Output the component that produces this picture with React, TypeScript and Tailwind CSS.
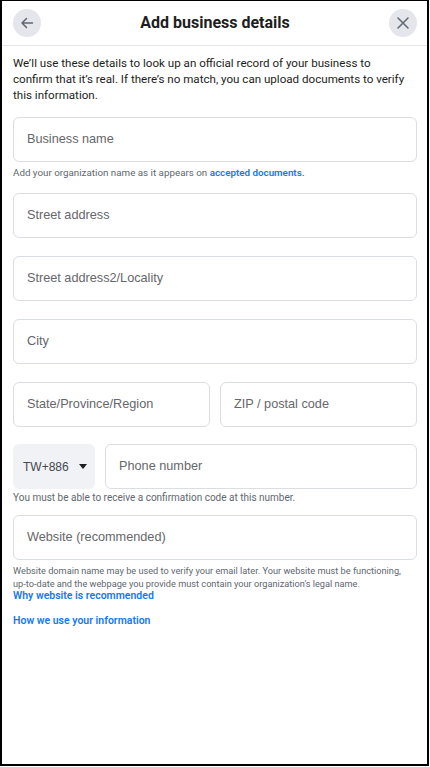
import React from "react";

const ui = { fontFamily: 'Roboto, "Noto Sans", Arial, sans-serif' };
const arial = { fontFamily: '"Liberation Sans", Arial, sans-serif' };

function Field({
  placeholder,
  className = "",
}: {
  placeholder: string;
  className?: string;
}) {
  return (
    <div
      className={`flex h-[45px] items-center rounded-[6px] border border-[#dadde1] bg-white px-[13px] ${className}`}
    >
      <input
        placeholder={placeholder}
        style={arial}
        className="w-full bg-transparent text-[12.7px] text-[#1c1e21] outline-none placeholder:text-[#65676b]"
      />
    </div>
  );
}

function Helper({
  children,
  className = "mt-[3px] text-[10px]",
}: {
  children: React.ReactNode;
  className?: string;
}) {
  return (
    <p className={`leading-[13px] text-[#606770] ${className}`}>{children}</p>
  );
}

export default function App() {
  return (
    <div
      style={ui}
      className="flex h-[766px] w-[429px] flex-col border-x-2 border-t border-b-2 border-black bg-white"
    >
      <header className="flex h-[45px] shrink-0 items-center justify-between border-b border-[#e4e6eb] pl-[11px] pr-[10px]">
        <button
          type="button"
          className="flex h-[28px] w-[28px] items-center justify-center rounded-full bg-[#e4e6eb]"
          aria-label="Back"
        >
          <svg width="14" height="14" viewBox="0 0 14 14" fill="none">
            <path
              d="M12.5 7H2M6.5 2.5L2 7l4.5 4.5"
              stroke="#606770"
              strokeWidth="1.5"
              strokeLinecap="round"
              strokeLinejoin="round"
            />
          </svg>
        </button>
        <h1 className="text-[16px] font-bold text-[#1c1e21]">
          Add business details
        </h1>
        <button
          type="button"
          className="flex h-[28px] w-[28px] items-center justify-center rounded-full bg-[#e4e6eb]"
          aria-label="Close"
        >
          <svg width="14" height="14" viewBox="0 0 14 14" fill="none">
            <path
              d="M2 2l10 10M12 2L2 12"
              stroke="#606770"
              strokeWidth="1.5"
              strokeLinecap="round"
            />
          </svg>
        </button>
      </header>

      <main className="flex flex-col pl-[11px] pr-[10px] pt-[9px]">
        <p className="whitespace-nowrap text-[11.6px] leading-[16px] text-[#1c1e21]">
          We’ll use these details to look up an official record of your
          business to
          <br />
          confirm that it’s real. If there’s no match, you can upload
          documents to verify
          <br />
          this information.
        </p>

        <Field placeholder="Business name" className="mt-[14px]" />
        <Helper className="mt-[4px] text-[9.8px]">
          Add your organization name as it appears on{" "}
          <span className="font-semibold text-[#1877f2]">accepted documents.</span>
        </Helper>

        <Field placeholder="Street address" className="mt-[14px]" />
        <Field placeholder="Street address2/Locality" className="mt-[18px]" />
        <Field placeholder="City" className="mt-[18px]" />

        <div className="mt-[18px] flex gap-[10px]">
          <Field placeholder="State/Province/Region" className="flex-1" />
          <Field placeholder="ZIP / postal code" className="flex-1" />
        </div>

        <div className="mt-[17px] flex gap-[10px]">
          <button
            type="button"
            style={arial}
            className="flex h-[45px] w-[82px] shrink-0 items-center gap-[10px] rounded-[6px] bg-[#f0f2f5] pl-[10px] text-[12px] text-[#444950]"
          >
            TW+886
            <svg width="8" height="5" viewBox="0 0 8 5">
              <path d="M0 0h8L4 5z" fill="#1c1e21" />
            </svg>
          </button>
          <Field placeholder="Phone number" className="flex-1" />
        </div>
        <Helper className="mt-[2px] text-[10px]">
          You must be able to receive a confirmation code at this number.
        </Helper>

        <Field placeholder="Website (recommended)" className="mt-[11px]" />
        <Helper className="mt-[4px] whitespace-nowrap text-[9.2px]">
          Website domain name may be used to verify your email later. Your
          website must be functioning,
          <br />
          up-to-date and the webpage you provide must contain your
          organization's legal name.
        </Helper>
        <a className="text-[10.5px] font-semibold leading-[12px] text-[#1877f2]">
          Why website is recommended
        </a>
        <a className="mt-[13px] text-[10.5px] font-semibold leading-[12px] text-[#1877f2]">
          How we use your information
        </a>
      </main>
    </div>
  );
}
